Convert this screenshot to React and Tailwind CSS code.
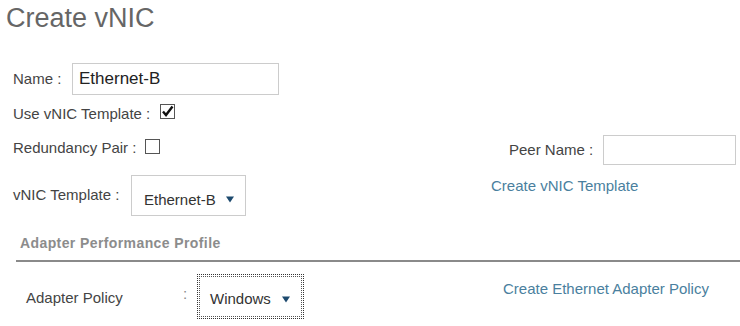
import React from 'react';

function Arrow() {
  return (
    <svg width="8" height="7" viewBox="0 0 8 7" className="shrink-0">
      <path d="M0 0.5 L8 0.5 L4 6.5 Z" fill="#1d4a6e" />
    </svg>
  );
}

function Checkbox({ checked }) {
  return (
    <div className="w-[15px] h-[15px] border border-[#555] bg-white flex items-center justify-center shrink-0">
      {checked && (
        <svg width="13" height="13" viewBox="0 0 13 13">
          <path d="M2 6.5 L5 10 L11.5 1.5" fill="none" stroke="#111" strokeWidth="2.4" />
        </svg>
      )}
    </div>
  );
}

export default function App() {
  return (
    <div className="w-[740px] h-[326px] bg-white overflow-hidden text-[#444] font-['Liberation_Sans',Arial,sans-serif]">
      <h1 className="pl-[6px] pt-[2px] text-[27px] leading-[32px] text-[#666] font-normal">Create vNIC</h1>

      {/* name */}
      <div className="mt-[29px] pl-[13px] flex items-center h-[32px] text-[15px]">
        <span className="w-[59px]">Name :</span>
        <div className="w-[207px] h-[32px] border border-[#ccc] flex items-center pl-[6px] text-[17px] text-[#222]">
          Ethernet-B
        </div>
      </div>

      {/* template checkbox */}
      <div className="mt-[9px] pl-[13px] flex items-center gap-[10px] h-[15px] text-[15px]">
        <span className="leading-[15px] pt-[4px]">Use vNIC Template :</span>
        <Checkbox checked />
      </div>

      {/* redundancy + template select | peer name + link */}
      <div className="mt-[16px] flex">
        <div className="w-[491px] pl-[13px]">
          <div className="mt-[4px] flex items-center gap-[9px] h-[15px] text-[15px]">
            <span className="leading-[15px] pt-[2px]">Redundancy Pair :</span>
            <Checkbox />
          </div>
          <div className="mt-[21px] flex items-center h-[41px] text-[15px]">
            <span className="w-[118px]">vNIC Template :</span>
            <div className="w-[115px] h-[41px] border border-[#ccc] flex items-center pl-[12px] pt-[12px] pb-[4px] gap-[10px] text-[#333]">
              <span className="leading-[18px]">Ethernet-B</span>
              <Arrow />
            </div>
          </div>
        </div>
        <div className="flex-1">
          <div className="flex items-center h-[30px] text-[15px]">
            <span className="ml-[18px] w-[94px]">Peer Name :</span>
            <div className="w-[133px] h-[30px] border border-[#ccc]" />
          </div>
          <div className="mt-[12px] text-[15px] leading-[18px] text-[#4a7f9e]">Create vNIC Template</div>
        </div>
      </div>

      {/* section header */}
      <div className="mt-[18px] pl-[20px] text-[14px] tracking-[0.4px] leading-[18px] font-bold text-[#8c8c8c]">
        Adapter Performance Profile
      </div>
      <div className="mt-[8px] ml-[16px] border-t-2 border-[#8a8a8a]" />

      {/* adapter policy */}
      <div className="mt-[12px] flex">
        <div className="w-[503px] pl-[26px] flex items-start">
          <span className="w-[157px] mt-[15px] text-[15px] leading-[18px]">Adapter Policy</span>
          <span className="w-[14px] mt-[11px] text-[15px] leading-[18px] text-[#888]">:</span>
          <div className="w-[107px] h-[45px] border border-dotted border-[#333] p-px">
            <div className="h-full border border-dotted border-[#555] flex items-center pl-[10px] pt-[6px] gap-[11px] text-[15px] text-[#333]">
              <span>Windows</span>
              <Arrow />
            </div>
          </div>
        </div>
        <div className="mt-[6px] text-[15px] leading-[18px] text-[#4a7f9e]">Create Ethernet Adapter Policy</div>
      </div>
    </div>
  );
}
